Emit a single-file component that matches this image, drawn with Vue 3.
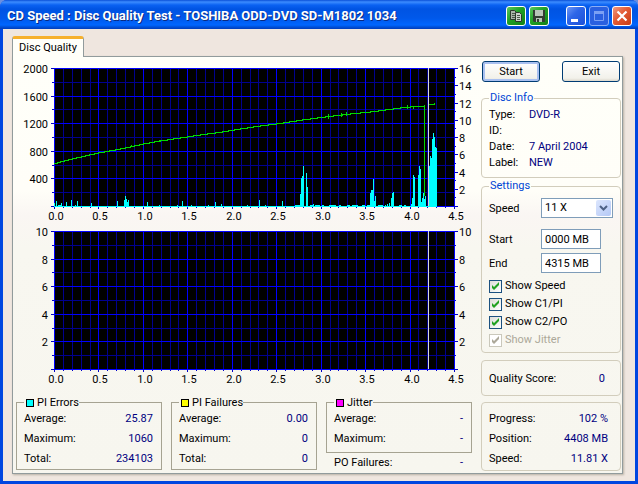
<script setup>
import { ref } from 'vue'

const PLOT_LEFT = 54
const PLOT_WIDTH = 400
const PLOT_HEIGHT = 138

const speed = ref('11 X')
const startPos = ref('0000 MB')
const endPos = ref('4315 MB')

const options = ref([
  { id: 'speed', label: 'Show Speed', on: true },
  { id: 'pi', label: 'Show C1/PI', on: true },
  { id: 'po', label: 'Show C2/PO', on: true },
  { id: 'jitter', label: 'Show Jitter', on: true, disabled: true },
])

const discInfo = [
  ['Type:', 'DVD-R'],
  ['ID:', ''],
  ['Date:', '7 April 2004'],
  ['Label:', 'NEW'],
]

const progress = [
  ['Progress:', '102 %'],
  ['Position:', '4408 MB'],
  ['Speed:', '11.81 X'],
]

const stats = [
  { title: 'PI Errors', swatch: 'cyan', rows: [['Average:', '25.87'], ['Maximum:', '1060'], ['Total:', '234103']] },
  { title: 'PI Failures', swatch: 'yellow', rows: [['Average:', '0.00'], ['Maximum:', '0'], ['Total:', '0']] },
  { title: 'Jitter', swatch: 'magenta', rows: [['Average:', '-'], ['Maximum:', '-']], extra: ['PO Failures:', '-'] },
]

const charts = [
  {
    id: 'errors',
    label: 'PI errors and speed',
    viewBox: '13 57 463 166',
    top: 68,
    left: ['2000', '1600', '1200', '800', '400'],
    right: ['16', '14', '12', '10', '8', '6', '4', '2'],
  },
  {
    id: 'failures',
    label: 'PI failures',
    viewBox: '13 223 463 164',
    top: 231,
    left: ['10', '8', '6', '4', '2'],
    right: ['10', '8', '6', '4', '2'],
  },
]

const columns = Array.from({ length: 46 }, (_, i) => ({
  x: PLOT_LEFT + Math.round((i * PLOT_WIDTH) / 45),
  major: i % 5 === 0,
  label: (i / 10).toFixed(1),
}))

const rows = Array.from({ length: 11 }, (_, i) => ({
  y: Math.round((i * PLOT_HEIGHT) / 10),
  major: i % 2 === 0,
}))

const step = (list, i, parts = list.length) => Math.round((i * PLOT_HEIGHT) / parts)

// [x, height, width]
const bars = [
  [54, 4], [56, 6], [58, 2, 3], [61, 4], [66, 5], [71, 7], [75, 2], [77, 6], [91, 4], [117, 6],
  [124, 7], [125, 11], [126, 8], [127, 5], [128, 7], [147, 5], [159, 2], [177, 2], [182, 6],
  [191, 2], [208, 2], [215, 5], [221, 3], [247, 2], [259, 7], [265, 2], [282, 6], [295, 2, 5],
  [300, 13], [301, 29], [302, 31], [303, 41], [306, 34], [307, 20], [310, 2, 3], [313, 3], [315, 2, 5],
  [322, 2, 2], [329, 2, 7], [339, 2, 2], [347, 2, 3], [352, 2, 6], [362, 2, 3], [367, 2, 3],
  [370, 14], [371, 17, 2], [373, 28], [374, 6], [375, 11], [378, 2, 5], [385, 2], [387, 3], [389, 4],
  [391, 9], [392, 14], [393, 15], [399, 2, 3], [404, 2, 2], [411, 3], [412, 9], [413, 32], [414, 30],
  [418, 32], [419, 41], [420, 38], [421, 5], [422, 9], [423, 14], [424, 8], [425, 11],
  [429, 41], [430, 51], [431, 49], [432, 68], [433, 74], [434, 70], [435, 60], [436, 59],
]

const speedPoints = [
  [54, 163], [60, 161], [72, 158], [85, 155], [98, 152], [115, 149], [130, 146], [143, 143], [160, 140],
  [180, 137], [200, 134], [222, 131], [240, 128], [260, 125], [276, 123], [302, 119], [325, 116],
  [350, 113], [370, 111], [385, 109], [400, 107], [410, 106], [424, 105],
]
const speedNoise = [[328, 114, 5], [341, 113, 4], [346, 112, 4], [407, 105, 4], [413, 106, 3], [131, 145, 2], [159, 140, 2]]

// One-pixel-high runs joined into a staircase, the way the trace is plotted.
const speedRuns = []
for (let i = 0; i < speedPoints.length - 1; i++) {
  const [x1, y1] = speedPoints[i]
  const [x2, y2] = speedPoints[i + 1]
  const n = Math.max(1, y1 - y2)
  for (let k = 0; k < n; k++) {
    const from = x1 + Math.round(((x2 - x1) * k) / n)
    const to = x1 + Math.round(((x2 - x1) * (k + 1)) / n)
    speedRuns.push({ x: from, y: y1 - k, width: to - from + 1 })
  }
}
</script>

<template>
  <main class="window">
    <header class="titlebar">
      <h1>CD Speed : Disc Quality Test - TOSHIBA ODD-DVD SD-M1802 1034</h1>
      <button class="tool green" aria-label="Copy">
        <svg viewBox="0 0 18 18">
          <path d="M3.500 3.500h4l2 2v7h-6z" fill="#a9b5a9" stroke="#2c3a2c" />
          <path d="M5 6.500h3M5 8.500h3M5 10.500h3" stroke="#4a574a" />
          <path d="M8.500 5.500h4l2 2v7h-6z" fill="#c9d2c9" stroke="#2c3a2c" />
          <path d="M10 8.500h3M10 10.500h3M10 12.500h3" stroke="#4a574a" />
        </svg>
      </button>
      <button class="tool green save" aria-label="Save">
        <svg viewBox="0 0 18 18">
          <path d="M3 3h12v12H4l-1-1z" fill="#333c33" />
          <path d="M5 3h8v6H5z" fill="#b9c4b9" />
          <path d="M6 11h6v4H6z" fill="#b9c4b9" />
          <path d="M7 12h2v3H7z" fill="#333c33" />
        </svg>
      </button>
      <button class="tool blue" aria-label="Minimize">
        <svg viewBox="0 0 18 18"><path d="M4 12h7v3H4z" fill="#fff" /></svg>
      </button>
      <button class="tool blue dim" aria-label="Maximize" disabled>
        <svg viewBox="0 0 18 18"><path d="M4 4h10v3H4z" fill="#7ba0f4" /><path d="M4.500 4.500h9v9h-9z" fill="none" stroke="#7ba0f4" /></svg>
      </button>
      <button class="tool red" aria-label="Close">
        <svg viewBox="0 0 18 18"><path d="M4.500 4.500l9 9M13.500 4.500l-9 9" stroke="#fff" stroke-width="2.200" /></svg>
      </button>
    </header>

    <div class="client">
      <nav class="tabs"><button class="tab">Disc Quality</button></nav>

      <div class="pane">
        <section class="results">
          <svg v-for="c in charts" :key="c.id" class="chart" :viewBox="c.viewBox" role="img" :aria-label="c.label">
            <g shape-rendering="crispEdges">
              <rect :x="PLOT_LEFT" :y="c.top" :width="PLOT_WIDTH" :height="PLOT_HEIGHT" fill="#000" />
              <g v-for="major in [false, true]" :key="major" :fill="major ? '#0000ff' : '#000090'">
                <template v-for="col in columns" :key="col.x">
                  <rect v-if="col.major === major" :x="col.x" :y="c.top" width="1" :height="PLOT_HEIGHT + 1" />
                </template>
                <template v-for="row in rows" :key="row.y">
                  <rect v-if="row.major === major" :x="PLOT_LEFT" :y="c.top + row.y" :width="PLOT_WIDTH + 1" height="1" />
                </template>
              </g>
              <g fill="#0000c8">
                <rect v-for="col in columns" :key="col.x" :x="col.x" :y="c.top + PLOT_HEIGHT + 1" width="1" :height="col.major ? 2 : 1" />
                <rect v-for="row in rows" :key="row.y" :x="row.major ? 51 : 52" :y="c.top + row.y" :width="row.major ? 3 : 2" height="1" />
                <rect
                  v-for="n in c.right.length * 2 + 1"
                  :key="n"
                  :x="455"
                  :y="c.top + step(c.right, n - 1, c.right.length * 2)"
                  :width="n % 2 ? 3 : 1"
                  height="1"
                />
              </g>
              <g v-if="c.id === 'errors'" fill="#00ffff">
                <rect x="54" y="206" width="383" height="1" />
                <rect v-for="b in bars" :key="b[0]" :x="b[0]" :y="207 - b[1]" :width="b[2] || 1" :height="b[1]" />
              </g>
              <g v-if="c.id === 'errors'" fill="#00d800">
                <rect v-for="r in speedRuns" :key="r.x" :x="r.x" :y="r.y" :width="r.width" height="1" />
                <rect v-for="n in speedNoise" :key="n[0]" :x="n[0]" :y="n[1]" width="1" :height="n[2]" />
                <rect x="424" y="105" width="1" height="91" />
                <rect x="429" y="104" width="6" height="1" />
                <rect x="434" y="103" width="1" height="1" />
              </g>
              <rect x="428" :y="c.top" width="1" :height="PLOT_HEIGHT" fill="#d8d8d8" />
            </g>
            <g class="axis">
              <text v-for="(t, i) in c.left" :key="t" x="48" :y="c.top + 5 + step(c.left, i)" text-anchor="end">{{ t }}</text>
              <text v-for="(t, i) in c.right" :key="t" x="459" :y="c.top + 5 + step(c.right, i)">{{ t }}</text>
              <template v-for="col in columns" :key="col.x">
                <text v-if="col.major" :x="col.x + 2" :y="c.top + 152" text-anchor="middle">{{ col.label }}</text>
              </template>
            </g>
          </svg>

          <div class="stats">
            <div v-for="s in stats" :key="s.title">
              <fieldset class="stat" :class="{ short: s.extra }">
                <legend><i class="swatch" :class="s.swatch"></i>{{ s.title }}</legend>
                <dl>
                  <div v-for="r in s.rows" :key="r[0]"><dt>{{ r[0] }}</dt><dd>{{ r[1] }}</dd></div>
                </dl>
              </fieldset>
              <dl v-if="s.extra" class="extra">
                <div><dt>{{ s.extra[0] }}</dt><dd>{{ s.extra[1] }}</dd></div>
              </dl>
            </div>
          </div>
        </section>

        <aside class="side">
          <div class="actions">
            <button class="push default">Start</button>
            <button class="push">Exit</button>
          </div>

          <fieldset class="group info">
            <legend>Disc Info</legend>
            <dl>
              <div v-for="d in discInfo" :key="d[0]"><dt>{{ d[0] }}</dt><dd>{{ d[1] }}</dd></div>
            </dl>
          </fieldset>

          <fieldset class="group settings">
            <legend>Settings</legend>
            <div class="field">
              <label for="speed">Speed</label>
              <span class="combo">
                <select id="speed" v-model="speed"><option>11 X</option></select>
                <span class="arrow"><svg viewBox="0 0 9 6"><path d="M1 1l3.500 3.500L8 1" fill="none" stroke="#4d6185" stroke-width="2" /></svg></span>
              </span>
            </div>
            <div class="field">
              <label for="start">Start</label>
              <input id="start" v-model="startPos" type="text" />
            </div>
            <div class="field">
              <label for="end">End</label>
              <input id="end" v-model="endPos" type="text" />
            </div>
            <label v-for="o in options" :key="o.id" class="check" :class="{ off: o.disabled }">
              <span class="box">
                <input v-model="o.on" type="checkbox" :disabled="o.disabled" />
                <svg v-if="o.on" viewBox="0 0 13 13"><path d="M3 5v3l2 2 5-5V2L5 7z" fill="currentColor" /></svg>
              </span>
              {{ o.label }}
            </label>
          </fieldset>

          <dl class="group score">
            <div><dt>Quality Score:</dt><dd>0</dd></div>
          </dl>

          <dl class="group progress">
            <div v-for="p in progress" :key="p[0]"><dt>{{ p[0] }}</dt><dd>{{ p[1] }}</dd></div>
          </dl>
        </aside>
      </div>
    </div>
  </main>
</template>

<style>
body {
  margin: 0;
  background: #6b8fe0;
}
</style>

<style scoped>
* {
  box-sizing: border-box;
}

.window {
  display: flex;
  flex-direction: column;
  min-height: 100vh;
  overflow: hidden;
  border-radius: 7px 7px 0 0;
  background: #0046e0;
  font: 11px/16px Roboto, "Liberation Sans", sans-serif;
  color: #000;
}

button,
input,
select {
  font: inherit;
  color: inherit;
}

dl,
dd,
fieldset {
  margin: 0;
}

.titlebar {
  display: flex;
  align-items: center;
  gap: 3px;
  height: 29px;
  padding: 2px 6px 0 7px;
  background: linear-gradient(#0a50d8 0, #3c8cff 2px, #0a62f2 5px, #0054e3 9px, #0058ea 18px, #0066ff 25px, #0050d8 27px, #003cbc 29px);
}

h1 {
  flex: 1;
  margin: 0;
  font: bold 13px/20px Roboto, sans-serif;
  color: #fff;
  text-shadow: 1px 1px 0 #0a2a80;
  white-space: nowrap;
}

.tool {
  width: 20px;
  height: 20px;
  padding: 0;
  border: 1px solid #fff;
  border-radius: 3px;
}

.tool svg {
  display: block;
  width: 18px;
  height: 18px;
}

.green {
  background: linear-gradient(135deg, #5cc860, #1fa025 45%, #128018);
}

.save {
  margin-right: 14px;
}

.blue {
  background: linear-gradient(135deg, #6f98f5, #2e66e8 40%, #1c50d8);
}

.dim {
  border-color: #8caef5;
  background: #2a60e0;
}

.red {
  background: linear-gradient(135deg, #f09a80, #e35a34 45%, #c83c14);
}

.client {
  display: flex;
  flex: 1;
  flex-direction: column;
  margin: 0 3px 3px;
  padding: 7px 12px 7px 9px;
  background: #efe6df;
}

.tabs {
  display: flex;
  height: 20px;
}

.tab {
  position: relative;
  width: 72px;
  height: 21px;
  padding: 0;
  border: 1px solid #919b9c;
  border-top: 3px solid #f6b02c;
  border-bottom: 0;
  border-radius: 3px 3px 0 0;
  background: #fffff9;
}

.pane {
  display: grid;
  flex: 1;
  grid-template-columns: minmax(0, 1fr) 140px;
  align-items: start;
  gap: 5px;
  padding-right: 1px;
  border: 1px solid #919b9c;
  background: linear-gradient(#fffff9 0, #fffef8 32%, #faf6f3 38%, #f8f7f0 46%, #f7f6ef 100%);
  box-shadow: 1px 1px 2px #b8b0a4;
}

.chart {
  display: block;
  width: 100%;
  height: auto;
}

.axis {
  font: 11px Roboto, "Liberation Sans", sans-serif;
}

.stats {
  display: grid;
  grid-template-columns: repeat(3, minmax(0, 1fr));
  gap: 9px;
  padding: 9px 4px 0 3px;
}

.stat {
  min-width: 0;
  padding: 0 8px 0 7px;
  border: 1px solid #a6a392;
}

.short {
  padding-bottom: 3px;
}

.stat legend {
  display: flex;
  align-items: center;
  gap: 3px;
  height: 13px;
  padding: 0 0 0 2px;
  line-height: 13px;
}

.swatch {
  width: 8px;
  height: 8px;
  border: 1px solid #000;
}

.cyan {
  background: #00ffff;
}

.yellow {
  background: #ffff00;
}

.magenta {
  background: #ff00ff;
}

dl div {
  display: flex;
  justify-content: space-between;
}

dd {
  color: #000080;
}

.stat dl div {
  line-height: 20px;
}

.extra {
  padding: 2px 9px 0 8px;
}

.side {
  display: flex;
  flex-direction: column;
  padding-top: 4px;
}

.actions {
  display: flex;
  justify-content: space-between;
  padding: 0 1px;
}

.push {
  width: 58px;
  height: 21px;
  padding: 0;
  border: 1px solid #003c74;
  border-radius: 3px;
  background: linear-gradient(#fff, #f2f1ea 85%, #dcd8cc);
}

.default {
  box-shadow: inset 0 0 0 2px #a9c0f0;
}

.group {
  min-width: 0;
  padding: 0 7px;
  border: 1px solid #d2cdbc;
  border-radius: 4px;
}

.group legend {
  height: 16px;
  padding: 0 1px;
  color: #0046d5;
}

.info {
  margin-top: 8px;
  padding-top: 1px;
  padding-bottom: 6px;
}

.info div {
  height: 16px;
  justify-content: flex-start;
}

.info dt {
  width: 40px;
}

.settings {
  display: flex;
  flex-direction: column;
}

.field {
  display: flex;
  align-items: center;
  height: 24px;
}

.field label {
  width: 52px;
  padding-top: 2px;
}

.field input {
  width: 60px;
  height: 20px;
  padding: 0 3px;
  border: 1px solid #7f9db9;
  background: #fff;
}

.combo {
  position: relative;
  flex: 1;
  height: 20px;
}

select {
  width: 100%;
  height: 20px;
  padding: 0 3px;
  border: 1px solid #7f9db9;
  border-radius: 0;
  background: #fff;
  appearance: none;
}

.arrow {
  position: absolute;
  top: 2px;
  right: 2px;
  display: grid;
  place-items: center;
  width: 15px;
  height: 16px;
  border-radius: 2px;
  background: linear-gradient(135deg, #dce6fd, #b4c8f6);
  pointer-events: none;
}

.arrow svg {
  width: 9px;
  height: 6px;
}

.field:nth-of-type(1) {
  margin: 2px 0 7px;
}

.check {
  display: flex;
  align-items: center;
  gap: 3px;
  height: 18px;
}

.check:first-of-type {
  margin-top: 2px;
}

.box {
  display: grid;
  width: 13px;
  height: 13px;
  color: #21a121;
}

.box > * {
  grid-area: 1 / 1;
  width: 13px;
  height: 13px;
  margin: 0;
}

.box input {
  appearance: none;
  border: 1px solid #1c5180;
  background: linear-gradient(135deg, #dcdcd7, #fff);
}

.box svg {
  pointer-events: none;
}

.off,
.off .box {
  color: #aca899;
}

.off input {
  border-color: #cac8bb;
  background: #fff;
}

.settings {
  margin-bottom: 7px;
  padding-bottom: 3px;
}

.score {
  margin-bottom: 6px;
  padding: 10px 15px 8px 7px;
}

.progress {
  padding: 6px 12px 1px 7px;
}

.progress div {
  line-height: 20px;
}
</style>
